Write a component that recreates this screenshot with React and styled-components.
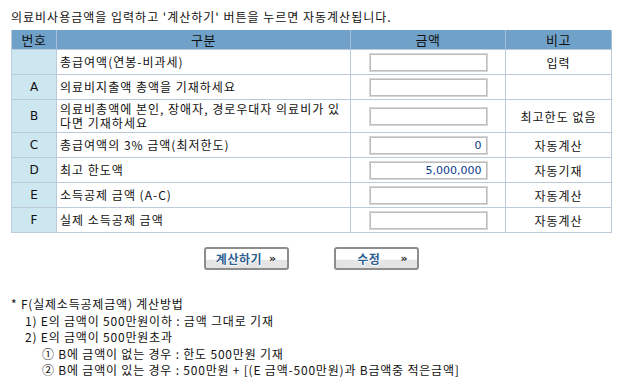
import React from 'react';
import styled, { createGlobalStyle } from 'styled-components';

const colors = {
  text: '#111111',
  headBg: '#70a1c8',
  noBg: '#cde7f0',
  line: '#bccbd9',
  value: '#0a3a8c',
  btnText: '#2f5f91',
};

const GlobalStyle = createGlobalStyle`
  body {
    margin: 0;
    background: #ffffff;
    font-family: "Noto Sans CJK KR", "Noto Sans", sans-serif;
    font-size: 12px;
    color: ${colors.text};
  }
`;

const Page = styled.div`
  width: 617px;
  padding: 9px 0 0 11px;
  box-sizing: border-box;
`;

const Intro = styled.p`
  margin: 0 0 5px;
  line-height: 16px;
  letter-spacing: 1px;
`;

const Table = styled.table`
  width: 600px;
  border-collapse: collapse;
  table-layout: fixed;
  border-left: 1px solid ${colors.line};
  border-right: 1px solid ${colors.line};

  & th {
    background: ${colors.headBg};
    height: 18px;
    padding: 0;
    font-weight: normal;
    font-size: 13px;
    letter-spacing: 0.5px;
    color: #111;
    border-right: 1px solid #a9c1d6;
  }

  & td {
    border: 1px solid ${colors.line};
    padding: 0;
    height: 24px;
  }
`;

const NoCell = styled.td`
  background: ${colors.noBg};
  text-align: center;
  font-family: "DejaVu Sans", sans-serif;
  font-size: 12px;
`;

const LabelCell = styled.td`
  && {
    padding: 0 4px 0 3px;
    height: ${props => (props.tall ? '32px' : '24px')};
  }
  line-height: 14px;
  letter-spacing: 1px;
`;

const AmountCell = styled.td`
  text-align: center;
`;

const NoteCell = styled.td`
  text-align: center;
  letter-spacing: 1px;
`;

const Input = styled.input`
  display: block;
  margin: 0 auto;
  width: 119px;
  height: 19px;
  box-sizing: border-box;
  border: 2px solid #d6d6d6;
  outline: 1px solid #bdbdbd;
  outline-offset: -2px;
  background: #fff;
  padding: 0 4px 0 0;
  text-align: right;
  font-family: "DejaVu Sans", sans-serif;
  font-size: 11px;
  color: ${colors.value};
`;

const ButtonRow = styled.div`
  width: 600px;
  display: flex;
  justify-content: center;
  gap: 45px;
  margin-top: 14px;
`;

const Button = styled.button`
  width: 85px;
  height: 23px;
  box-sizing: border-box;
  border: 2px solid #8d8d8d;
  border-radius: 3px;
  background: linear-gradient(#ffffff 0%, #ffffff 55%, #e4e4e4 56%, #e4e4e4 100%);
  display: flex;
  align-items: center;
  justify-content: ${props => (props.spread ? 'flex-end' : 'center')};
  gap: ${props => (props.spread ? '20px' : '7px')};
  padding: 0 ${props => (props.spread ? '9px' : '0')} 0 0;
  font-family: "Noto Sans CJK KR", sans-serif;
  cursor: pointer;
`;

const BtnLabel = styled.span`
  font-weight: bold;
  font-size: 12px;
  letter-spacing: 0.5px;
  color: ${colors.btnText};
  text-shadow: 1px 0 #fff, -1px 0 #fff, 0 1px #fff, 0 -1px #fff;
`;

const Arrow = styled.span`
  font-weight: bold;
  font-size: 11px;
  color: #222;
  font-family: "DejaVu Sans", sans-serif;
`;

const Notes = styled.div`
  margin-top: 26px;
  line-height: 16.5px;
  letter-spacing: 0.8px;
`;

const NoteLine = styled.div`
  padding-left: ${props => props.indent || 0}px;
`;

const rows = [
  { no: '', label: '총급여액(연봉-비과세)', value: '', note: '입력' },
  { no: 'A', label: '의료비지출액 총액을 기재하세요', value: '', note: '' },
  { no: 'B', label: '의료비총액에 본인, 장애자, 경로우대자 의료비가 있다면 기재하세요', value: '', note: '최고한도 없음', tall: true },
  { no: 'C', label: '총급여액의 3% 금액(최저한도)', value: '0', note: '자동계산' },
  { no: 'D', label: '최고 한도액', value: '5,000,000', note: '자동기재' },
  { no: 'E', label: '소득공제 금액 (A-C)', value: '', note: '자동계산' },
  { no: 'F', label: '실제 소득공제 금액', value: '', note: '자동계산' },
];

export default function App() {
  return (
    <Page>
      <GlobalStyle />
      <Intro>의료비사용금액을 입력하고 '계산하기' 버튼을 누르면 자동계산됩니다.</Intro>
      <Table>
        <colgroup>
          <col style={{ width: 45 }} />
          <col style={{ width: 294 }} />
          <col style={{ width: 155 }} />
          <col style={{ width: 106 }} />
        </colgroup>
        <thead>
          <tr>
            <th>번호</th>
            <th>구분</th>
            <th>금액</th>
            <th>비고</th>
          </tr>
        </thead>
        <tbody>
          {rows.map((r, i) => (
            <tr key={i}>
              <NoCell>{r.no}</NoCell>
              <LabelCell tall={r.tall}>{r.label}</LabelCell>
              <AmountCell>
                <Input readOnly value={r.value} />
              </AmountCell>
              <NoteCell>{r.note}</NoteCell>
            </tr>
          ))}
        </tbody>
      </Table>
      <ButtonRow>
        <Button>
          <BtnLabel>계산하기</BtnLabel>
          <Arrow>»</Arrow>
        </Button>
        <Button spread>
          <BtnLabel>수정</BtnLabel>
          <Arrow>»</Arrow>
        </Button>
      </ButtonRow>
      <Notes>
        <NoteLine>* F(실제소득공제금액) 계산방법</NoteLine>
        <NoteLine indent={14}>1) E의 금액이 500만원이하 : 금액 그대로 기재</NoteLine>
        <NoteLine indent={14}>2) E의 금액이 500만원초과</NoteLine>
        <NoteLine indent={31}>① B에 금액이 없는 경우 : 한도 500만원 기재</NoteLine>
        <NoteLine indent={31}>② B에 금액이 있는 경우 : 500만원 + [(E 금액-500만원)과 B금액중 적은금액]</NoteLine>
      </Notes>
    </Page>
  );
}
